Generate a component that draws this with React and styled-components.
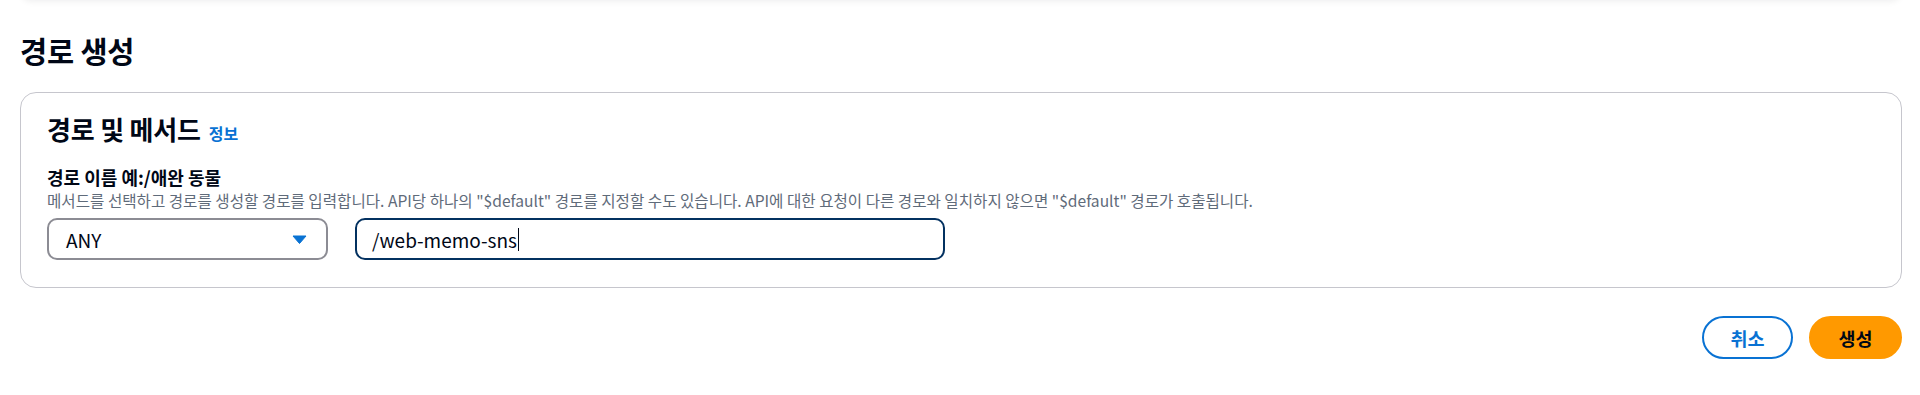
import React from "react";
import styled, { createGlobalStyle } from "styled-components";

const Global = createGlobalStyle`
  html, body { margin: 0; padding: 0; background: #ffffff; }
  body {
    font-family: "Noto Sans CJK KR", "Noto Sans", sans-serif;
    color: #000716;
    overflow: hidden;
  }
`;

const Page = styled.div`
  width: 1920px;
  height: 395px;
  overflow: hidden;
  padding: 0 18px 0 20px;
  box-sizing: border-box;
`;

const PrevCard = styled.div`
  height: 24px;
  margin: -24px 0 0 0;
  border-radius: 16px;
  background: #ffffff;
  box-shadow: 0 1px 7px rgba(0, 7, 22, 0.08);
`;

const Title = styled.h1`
  margin: 32px 0 0;
  font-size: 29.5px;
  line-height: 36px;
  font-weight: 700;
  letter-spacing: -0.2px;
`;

const Card = styled.section`
  margin-top: 24px;
  border: 1px solid #c6c6cd;
  border-radius: 16px;
  padding: 20px 26px 27px;
  box-sizing: border-box;
  background: #ffffff;
`;

const CardHeader = styled.div`
  display: flex;
  align-items: baseline;
  gap: 8px;
`;

const CardTitle = styled.h2`
  margin: 0;
  font-size: 26px;
  line-height: 31px;
  font-weight: 700;
  letter-spacing: -0.2px;
`;

const InfoLink = styled.a`
  font-size: 16px;
  font-weight: 700;
  color: #0972d3;
  text-decoration: none;
`;

const Field = styled.div`
  margin-top: 21px;
  display: flex;
  flex-direction: column;
`;

const Label = styled.label`
  font-size: 18px;
  line-height: 22px;
  font-weight: 700;
`;

const Description = styled.div`
  margin-top: 2px;
  font-size: 15.6px;
  line-height: 20px;
  color: #5f6b7a;
`;

const Controls = styled.div`
  margin-top: 8px;
  display: flex;
  gap: 27px;
`;

const Select = styled.div`
  width: 281px;
  height: 42px;
  box-sizing: border-box;
  border: 2px solid #8c8c94;
  border-radius: 10px;
  display: flex;
  align-items: center;
  justify-content: space-between;
  padding: 0 19px 0 17px;
  font-size: 19px;
`;

const Caret = styled.svg`
  width: 15px;
  height: 9px;
  display: block;
`;

const TextBox = styled.div`
  width: 590px;
  height: 42px;
  box-sizing: border-box;
  border: 2px solid #033160;
  border-radius: 10px;
  display: flex;
  align-items: center;
  padding: 0 15px;
  font-size: 19px;
`;

const Cursor = styled.span`
  display: inline-block;
  width: 1px;
  height: 23px;
  background: #000716;
  margin-left: 1px;
`;

const Actions = styled.div`
  margin-top: 28px;
  display: flex;
  justify-content: flex-end;
  gap: 16px;
`;

const Button = styled.button`
  height: 43px;
  min-width: ${(p) => p.$w}px;
  box-sizing: border-box;
  border-radius: 22px;
  border: 2px solid ${(p) => (p.$primary ? "#ff9900" : "#0972d3")};
  background: ${(p) => (p.$primary ? "#ff9900" : "#ffffff")};
  color: ${(p) => (p.$primary ? "#000716" : "#0972d3")};
  font-family: "Noto Sans CJK KR", "Noto Sans", sans-serif;
  font-size: 18.5px;
  font-weight: 700;
  padding: 0 20px;
`;

export default function App() {
  return (
    <>
      <Global />
      <Page>
        <PrevCard />
        <Title>경로 생성</Title>
        <Card>
          <CardHeader>
            <CardTitle>경로 및 메서드</CardTitle>
            <InfoLink href="#">정보</InfoLink>
          </CardHeader>
          <Field>
            <Label>경로 이름 예:/애완 동물</Label>
            <Description>
              메서드를 선택하고 경로를 생성할 경로를 입력합니다. API당 하나의 "$default" 경로를 지정할 수도 있습니다. API에 대한 요청이 다른 경로와 일치하지 않으면 "$default" 경로가 호출됩니다.
            </Description>
            <Controls>
              <Select>
                <span>ANY</span>
                <Caret viewBox="0 0 15 9">
                  <path d="M1 1 L14 1 L7.5 8.5 Z" fill="#0972d3" stroke="#0972d3" strokeWidth="1" strokeLinejoin="round" />
                </Caret>
              </Select>
              <TextBox>
                <span>/web-memo-sns</span>
                <Cursor />
              </TextBox>
            </Controls>
          </Field>
        </Card>
        <Actions>
          <Button $w={91}>취소</Button>
          <Button $primary $w={93}>생성</Button>
        </Actions>
      </Page>
    </>
  );
}
